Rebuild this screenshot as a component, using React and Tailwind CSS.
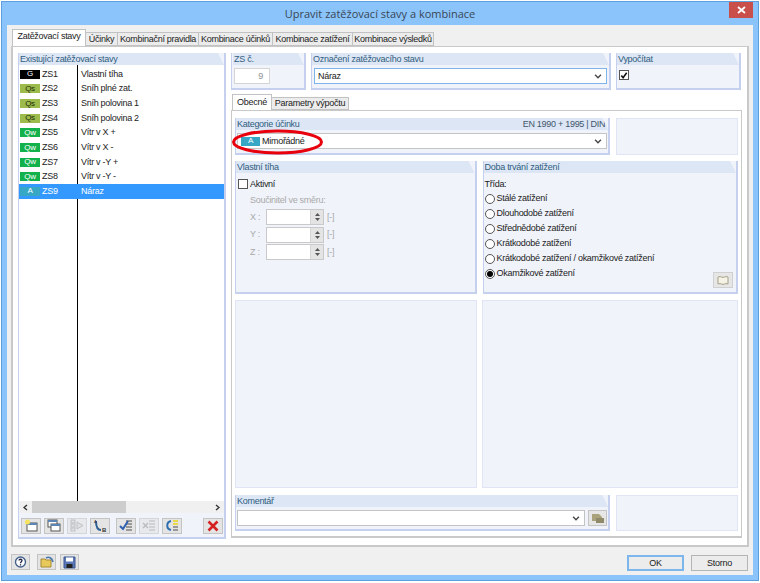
const loadCases = [
  { tag: "G", tagClass: "bg-black text-white", no: "ZS1", name: "Vlastní tíha" },
  { tag: "Qs", tagClass: "bg-[#9dbb4d] text-[#1c2a08]", no: "ZS2", name: "Sníh plné zat." },
  { tag: "Qs", tagClass: "bg-[#9dbb4d] text-[#1c2a08]", no: "ZS3", name: "Sníh polovina 1" },
  { tag: "Qs", tagClass: "bg-[#9dbb4d] text-[#1c2a08]", no: "ZS4", name: "Sníh polovina 2" },
  { tag: "Qw", tagClass: "bg-[#12b14c] text-white", no: "ZS5", name: "Vítr v X +" },
  { tag: "Qw", tagClass: "bg-[#12b14c] text-white", no: "ZS6", name: "Vítr v X -" },
  { tag: "Qw", tagClass: "bg-[#12b14c] text-white", no: "ZS7", name: "Vítr v -Y +" },
  { tag: "Qw", tagClass: "bg-[#12b14c] text-white", no: "ZS8", name: "Vítr v -Y -" },
  { tag: "A", tagClass: "bg-[#37a7c6] text-white", no: "ZS9", name: "Náraz", selected: true },
];

const durations = [
  "Stálé zatížení",
  "Dlouhodobé zatížení",
  "Střednědobé zatížení",
  "Krátkodobé zatížení",
  "Krátkodobé zatížení / okamžikové zatížení",
  "Okamžikové zatížení",
];

const Chevron = () => (
  <svg width="8" height="5" viewBox="0 0 9 6" className="shrink-0">
    <path d="M1 1 L4.5 4.5 L8 1" fill="none" stroke="#444" strokeWidth="1.6" />
  </svg>
);

// group box with the light blue header and the cut top right corner
const Group = ({ title, right, className, children }) => (
  <div className={`relative flex flex-col bg-[#f0f3fa] border-r-2 border-b-2 border-l border-[#c5d0ee] ${className}`}>
    <div className="flex h-[12px] shrink-0 items-center justify-between bg-[#dde6f5] pl-[2px] pr-[2px] pt-px leading-none text-[#2f5d7e] [clip-path:polygon(0_0,calc(100%-6px)_0,100%_100%,0_100%)]">
      <span className="-ml-px">{title}</span>
      {right && <span className="mr-[1px] text-[#40566c]">{right}</span>}
    </div>
    {children}
  </div>
);

const Tool = ({ children, className = "" }) => (
  <div className={`flex h-[16px] w-[20px] items-center justify-center border border-[#c4c4c4] bg-[#e4e4e4] ${className}`}>
    {children}
  </div>
);

const Spin = ({ label }) => (
  <div className="flex h-[16px] items-center text-[#a9a9a9]">
    <span className="w-[17px] pl-[1px]">{label} :</span>
    <div className="flex h-[16px] w-[58px] border border-[#c9c9c9] bg-white">
      <div className="flex-1" />
      <div className="flex w-[13px] flex-col items-center justify-center gap-[2px] border-l border-[#d5d5d5] bg-[#e4e4e4]">
        <svg width="5" height="3" viewBox="0 0 5 3"><path d="M2.5 0 L5 3 H0 Z" fill="#555" /></svg>
        <svg width="5" height="3" viewBox="0 0 5 3"><path d="M0 0 H5 L2.5 3 Z" fill="#555" /></svg>
      </div>
    </div>
    <span className="ml-[3px]">[-]</span>
  </div>
);

export default function App() {
  return (
    <div className="relative h-[583px] w-[760px] bg-white text-[9px] leading-none tracking-[-0.28px] text-[#222] whitespace-nowrap" style={{ fontFamily: '"Liberation Sans", Arial, sans-serif' }}>
      <div className="absolute inset-x-px top-px bottom-[2px] flex flex-col border border-[#5d9fdc] bg-[#8ac4fb] px-[5px] pb-[5px]">
        {/* title bar */}
        <div className="relative flex h-[23px] shrink-0 items-center justify-center text-[11px] tracking-normal text-[#3a4654]" style={{ fontFamily: '"Open Sans", sans-serif' }}>
          Upravit zatěžovací stavy a kombinace
          <div className="absolute right-0 top-0 flex h-[16px] w-[24px] items-center justify-center bg-[#c9504a]">
            <svg width="9" height="8" viewBox="0 0 9 8"><path d="M1 1 L8 7 M8 1 L1 7" stroke="#fff" strokeWidth="1.8" /></svg>
          </div>
        </div>

        <div className="flex min-h-0 flex-1 flex-col bg-[#f0f0f0] px-[4px] pt-[5px]">
          {/* main tabs */}
          <div className="flex h-[16px] items-end pl-px">
            <div className="z-10 flex h-[17px] w-[74px] items-center justify-center border border-b-0 border-[#c2c2c2] bg-white pb-[3px]">Zatěžovací stavy</div>
            {[["Účinky", "w-[32px]"], ["Kombinační pravidla", "w-[81px]"], ["Kombinace účinků", "w-[74px]"], ["Kombinace zatížení", "w-[80px]"], ["Kombinace výsledků", "w-[81px]"]].map(([t, w]) => (
              <div key={t} className={`flex h-[14px] items-center justify-center border border-l-0 border-[#c2c2c2] bg-[#ececec] ${w}`}>{t}</div>
            ))}
          </div>

          <div className="flex h-[501px] gap-[5px] border-2 border-[#c9c9c9] border-t bg-white pl-[5px] pr-[5px] pt-[6px]">
            {/* left column */}
            <Group title="Existující zatěžovací stavy" className="h-[486px] w-[208px] shrink-0">
              <div className="relative flex-1 bg-white pt-[2px]">
                <div className="absolute bottom-0 left-[58px] top-0 w-px bg-black" />
                {loadCases.map((c) => (
                  <div key={c.no} className={`relative flex h-[14.65px] items-center ${c.selected ? "bg-[#3399ff] text-white" : ""}`}>
                    <span className={`ml-px flex h-[9px] w-[20px] items-center justify-center text-[8px] ${c.tagClass}`}>{c.tag}</span>
                    <span className="ml-[2px] w-[37px]">{c.no}</span>
                    <span className="ml-[2px]">{c.name}</span>
                  </div>
                ))}
              </div>
              <div className="flex h-[12px] shrink-0 items-center bg-[#f0f0f0]">
                <div className="flex w-[13px] justify-center"><svg width="5" height="7" viewBox="0 0 5 7"><path d="M4 1 L1 3.5 L4 6" fill="none" stroke="#333" strokeWidth="1.4" /></svg></div>
                <div className="h-full w-[94px] bg-[#cdcdcd]" />
                <div className="flex-1" />
                <div className="flex w-[13px] justify-center"><svg width="5" height="7" viewBox="0 0 5 7"><path d="M1 1 L4 3.5 L1 6" fill="none" stroke="#333" strokeWidth="1.4" /></svg></div>
              </div>
              {/* list toolbar */}
              <div className="flex h-[24px] shrink-0 items-center gap-[3px] pl-[2px] pt-[1px]">
                <Tool>
                  <svg width="14" height="13" viewBox="0 0 14 13"><rect x="3" y="4" width="10" height="8" fill="#fff" stroke="#555" /><rect x="3" y="4" width="10" height="2" fill="#5c85b5" /><circle cx="3.5" cy="3" r="2.5" fill="#f7e35a" /></svg>
                </Tool>
                <Tool>
                  <svg width="14" height="13" viewBox="0 0 14 13"><rect x="1" y="1" width="9" height="7" fill="#fff" stroke="#555" /><rect x="1" y="1" width="9" height="2" fill="#5c85b5" /><rect x="4" y="5" width="9" height="7" fill="#fff" stroke="#555" /><rect x="4" y="5" width="9" height="2" fill="#5c85b5" /></svg>
                </Tool>
                <Tool className="opacity-60">
                  <svg width="14" height="13" viewBox="0 0 14 13"><g fill="#d5d5d5" stroke="#a0a0a0"><rect x="1" y="1" width="4" height="3" /><rect x="1" y="5" width="4" height="3" /><rect x="1" y="9" width="4" height="3" /><path d="M7 3 L13 6.5 L7 10 Z" /></g></svg>
                </Tool>
                <Tool>
                  <svg width="15" height="14" viewBox="0 0 15 14"><path d="M3 2 C3 8 4 11 8 11" fill="none" stroke="#2e5f95" strokeWidth="2" /><text x="1" y="4" fontSize="4" fill="#333">A</text><text x="9" y="13" fontSize="6" fontWeight="bold" fill="#333">B</text></svg>
                </Tool>
                <Tool className="ml-[3px]">
                  <svg width="14" height="13" viewBox="0 0 14 13"><path d="M7 2 H13 M7 5 H13 M7 8 H13 M7 11 H13" stroke="#999" strokeWidth="2" /><path d="M1 7 L4 10 L9 2" fill="none" stroke="#2e5fb0" strokeWidth="2" /></svg>
                </Tool>
                <Tool className="opacity-60">
                  <svg width="14" height="13" viewBox="0 0 14 13"><path d="M7 2 H13 M7 5 H13 M7 8 H13 M7 11 H13" stroke="#bbb" strokeWidth="2" /><path d="M1 4 L6 9 M6 4 L1 9" stroke="#999" strokeWidth="1.5" /></svg>
                </Tool>
                <Tool>
                  <svg width="14" height="13" viewBox="0 0 14 13"><path d="M8 2 H13 M8 5 H13" stroke="#e9d84a" strokeWidth="2" /><path d="M8 8 H13 M8 11 H13" stroke="#999" strokeWidth="2" /><path d="M6 2 C1 3 1 10 6 11" fill="none" stroke="#2e6fb0" strokeWidth="2" /></svg>
                </Tool>
                <Tool className="ml-[18px]">
                  <svg width="12" height="12" viewBox="0 0 12 12"><path d="M1.5 1.5 L10.5 10.5 M10.5 1.5 L1.5 10.5" stroke="#d42020" strokeWidth="2.6" /></svg>
                </Tool>
              </div>
            </Group>

            {/* right column */}
            <div className="flex min-w-0 flex-1 flex-col">
              <div className="flex h-[37px] shrink-0 gap-[5px]">
                <Group title="ZS č." className="w-[75px] pl-px">
                  <div className="ml-px mt-[3px] flex h-[16px] w-[36px] items-center justify-end border border-[#d5d5d5] bg-white pr-[6px] text-[#8f8f8f]">9</div>
                </Group>
                <Group title="Označení zatěžovacího stavu" className="w-[300px]">
                  <div className="mx-[2px] mt-[3px] flex h-[16px] items-center justify-between border border-[#7eb4ea] bg-white pl-[3px] pr-[4px]">Náraz<Chevron /></div>
                </Group>
                <Group title="Vypočítat" className="w-[125px]">
                  <div className="ml-[2px] mt-[5px] flex h-[10px] w-[10px] items-center justify-center border border-[#555] bg-white">
                    <svg width="9" height="9" viewBox="0 0 9 9"><path d="M1.5 4.5 L3.5 7 L7.5 1.5" fill="none" stroke="#111" strokeWidth="1.8" /></svg>
                  </div>
                </Group>
              </div>

              {/* inner tabs */}
              <div className="mt-[5px] flex h-[15px] shrink-0 items-end pl-px">
                <div className="z-10 flex h-[16px] w-[40px] items-center justify-center border border-b-0 border-[#c2c2c2] bg-white">Obecné</div>
                <div className="flex h-[13px] w-[77px] items-center justify-center border border-l-0 border-[#c2c2c2] bg-[#ececec]">Parametry výpočtu</div>
              </div>

              <div className="mb-[7px] flex flex-1 flex-col border border-b-2 border-[#c9c9c9] px-[3px] pb-[5px] pt-[7px]">
                <div className="relative flex h-[37px] shrink-0 gap-[6px]">
                  <Group title="Kategorie účinku" right="EN 1990 + 1995 | DIN" className="w-[376px]">
                    <div className="mx-[1px] mt-[3px] flex h-[16px] items-center justify-between border border-[#c4c4c4] bg-white pl-[3px] pr-[4px]">
                      <span className="flex items-center gap-[2px]">
                        <span className="flex h-[9px] w-[19px] items-center justify-center bg-[#37a7c6] text-[8px] text-white">A</span>
                        Mimořádné
                      </span>
                      <Chevron />
                    </div>
                  </Group>
                  <div className="w-[122px] border border-[#dfe5f4] bg-[#f0f3fa]" />
                  {/* red marker around the category */}
                  <svg className="absolute -left-[4px] top-[10px]" width="93" height="28" viewBox="0 0 93 28">
                    <ellipse cx="46.5" cy="14" rx="44" ry="11" fill="none" stroke="#e8000c" strokeWidth="3" />
                  </svg>
                </div>

                <div className="mt-[6px] flex h-[133px] shrink-0 gap-[6px]">
                  <Group title="Vlastní tíha" className="w-[242px]">
                    <div className="flex flex-1 flex-col pl-[2px] pt-[6px]">
                      <div className="flex items-center gap-[1px]">
                        <span className="h-[10px] w-[10px] border border-[#555] bg-white" />
                        <span className="ml-[1px]">Aktivní</span>
                      </div>
                      <div className="ml-[12px] mt-[7px] text-[#a9a9a9]">Součinitel ve směru:</div>
                      <div className="ml-[11px] mt-[4px] flex flex-col gap-[1.5px]">
                        <Spin label="X" />
                        <Spin label="Y" />
                        <Spin label="Z" />
                      </div>
                    </div>
                  </Group>
                  <Group title="Doba trvání zatížení" className="w-[256px]">
                    <div className="relative flex flex-1 flex-col pl-[1px] pt-[6px]">
                      <div className="mb-[1px] h-[11px] pt-[1px]">Třída:</div>
                      {durations.map((d, i) => (
                        <div key={d} className="flex h-[15px] items-center gap-[1px]">
                          <span className="flex h-[10px] w-[10px] shrink-0 items-center justify-center rounded-full border border-[#555] bg-white">
                            {i === 5 && <span className="h-[6px] w-[6px] rounded-full bg-black" />}
                          </span>
                          <span className="ml-[1px]">{d}</span>
                        </div>
                      ))}
                      <div className="absolute bottom-[4px] right-[3px] flex h-[16px] w-[20px] items-center justify-center border border-[#d0d0d0] bg-[#e6e6e6]">
                        <svg width="12" height="9" viewBox="0 0 12 9"><path d="M6 1.5 C4 0.5 2 0.5 1 1 V8 C2 7.5 4 7.5 6 8.5 C8 7.5 10 7.5 11 8 V1 C10 0.5 8 0.5 6 1.5 Z" fill="#f5f2e6" stroke="#a5a08a" /></svg>
                      </div>
                    </div>
                  </Group>
                </div>

                <div className="mt-[6px] flex flex-1 gap-[5px]">
                  <div className="w-[243px] border border-[#dfe5f4] bg-[#f0f3fa]" />
                  <div className="w-[257px] border border-[#dfe5f4] bg-[#f0f3fa]" />
                </div>

                <div className="mt-[7px] flex h-[36px] shrink-0 gap-[6px]">
                  <Group title="Komentář" className="w-[376px]">
                    <div className="mx-[1px] mt-[3px] flex gap-[3px]">
                      <div className="flex h-[16px] flex-1 items-center justify-end border border-[#c4c4c4] bg-white pr-[4px]"><Chevron /></div>
                      <div className="flex h-[16px] w-[19px] items-center justify-center border border-[#c4c4c4] bg-[#e6e6e6]">
                        <svg width="14" height="11" viewBox="0 0 14 11"><path d="M1 1 H8 L11 4 V8 H1 Z" fill="#a9a27a" /><rect x="5" y="5" width="8" height="5" fill="#8f8a6a" /></svg>
                      </div>
                    </div>
                  </Group>
                  <div className="w-[122px] border border-[#dfe5f4] bg-[#f0f3fa]" />
                </div>
              </div>
            </div>
          </div>

          {/* footer */}
          <div className="flex flex-1 items-start justify-between pt-[7px]">
            <div className="flex gap-[7px]">
              <Tool className="!w-[19px]">
                <svg width="13" height="13" viewBox="0 0 13 13"><circle cx="6.5" cy="6" r="5" fill="#fff" stroke="#44618a" strokeWidth="1.4" /><path d="M5 4.5 C5 2.8 8 2.8 8 4.5 C8 5.7 6.5 5.7 6.5 7.2 M6.5 8.2 V9.4" fill="none" stroke="#224" strokeWidth="1.3" /></svg>
              </Tool>
              <div className="flex gap-[4px]">
                <Tool className="!w-[19px]">
                  <svg width="14" height="12" viewBox="0 0 14 12"><path d="M1 3 H5 L6 4 H11 V11 H1 Z" fill="#e8c95c" stroke="#a68b32" /><path d="M6 2 C9 0 12 2 13 6" fill="none" stroke="#4a78ad" strokeWidth="1.6" /></svg>
                </Tool>
                <Tool className="!w-[19px]">
                  <svg width="13" height="13" viewBox="0 0 13 13"><path d="M1 1 H12 V12 H1 Z" fill="#5b78b8" stroke="#3a5590" /><rect x="3" y="1.5" width="7" height="4" fill="#fff" /><rect x="3.5" y="8" width="6" height="4" fill="#222" /></svg>
                </Tool>
              </div>
            </div>
            <div className="mt-px flex gap-[7px] pr-[1px]">
              <div className="flex h-[16px] w-[57px] items-center justify-center border-2 border-[#7db6ea] bg-[#ececec]">OK</div>
              <div className="flex h-[16px] w-[57px] items-center justify-center border border-[#b5b5b5] bg-[#ececec]">Storno</div>
            </div>
          </div>
        </div>
      </div>
    </div>
  );
}
